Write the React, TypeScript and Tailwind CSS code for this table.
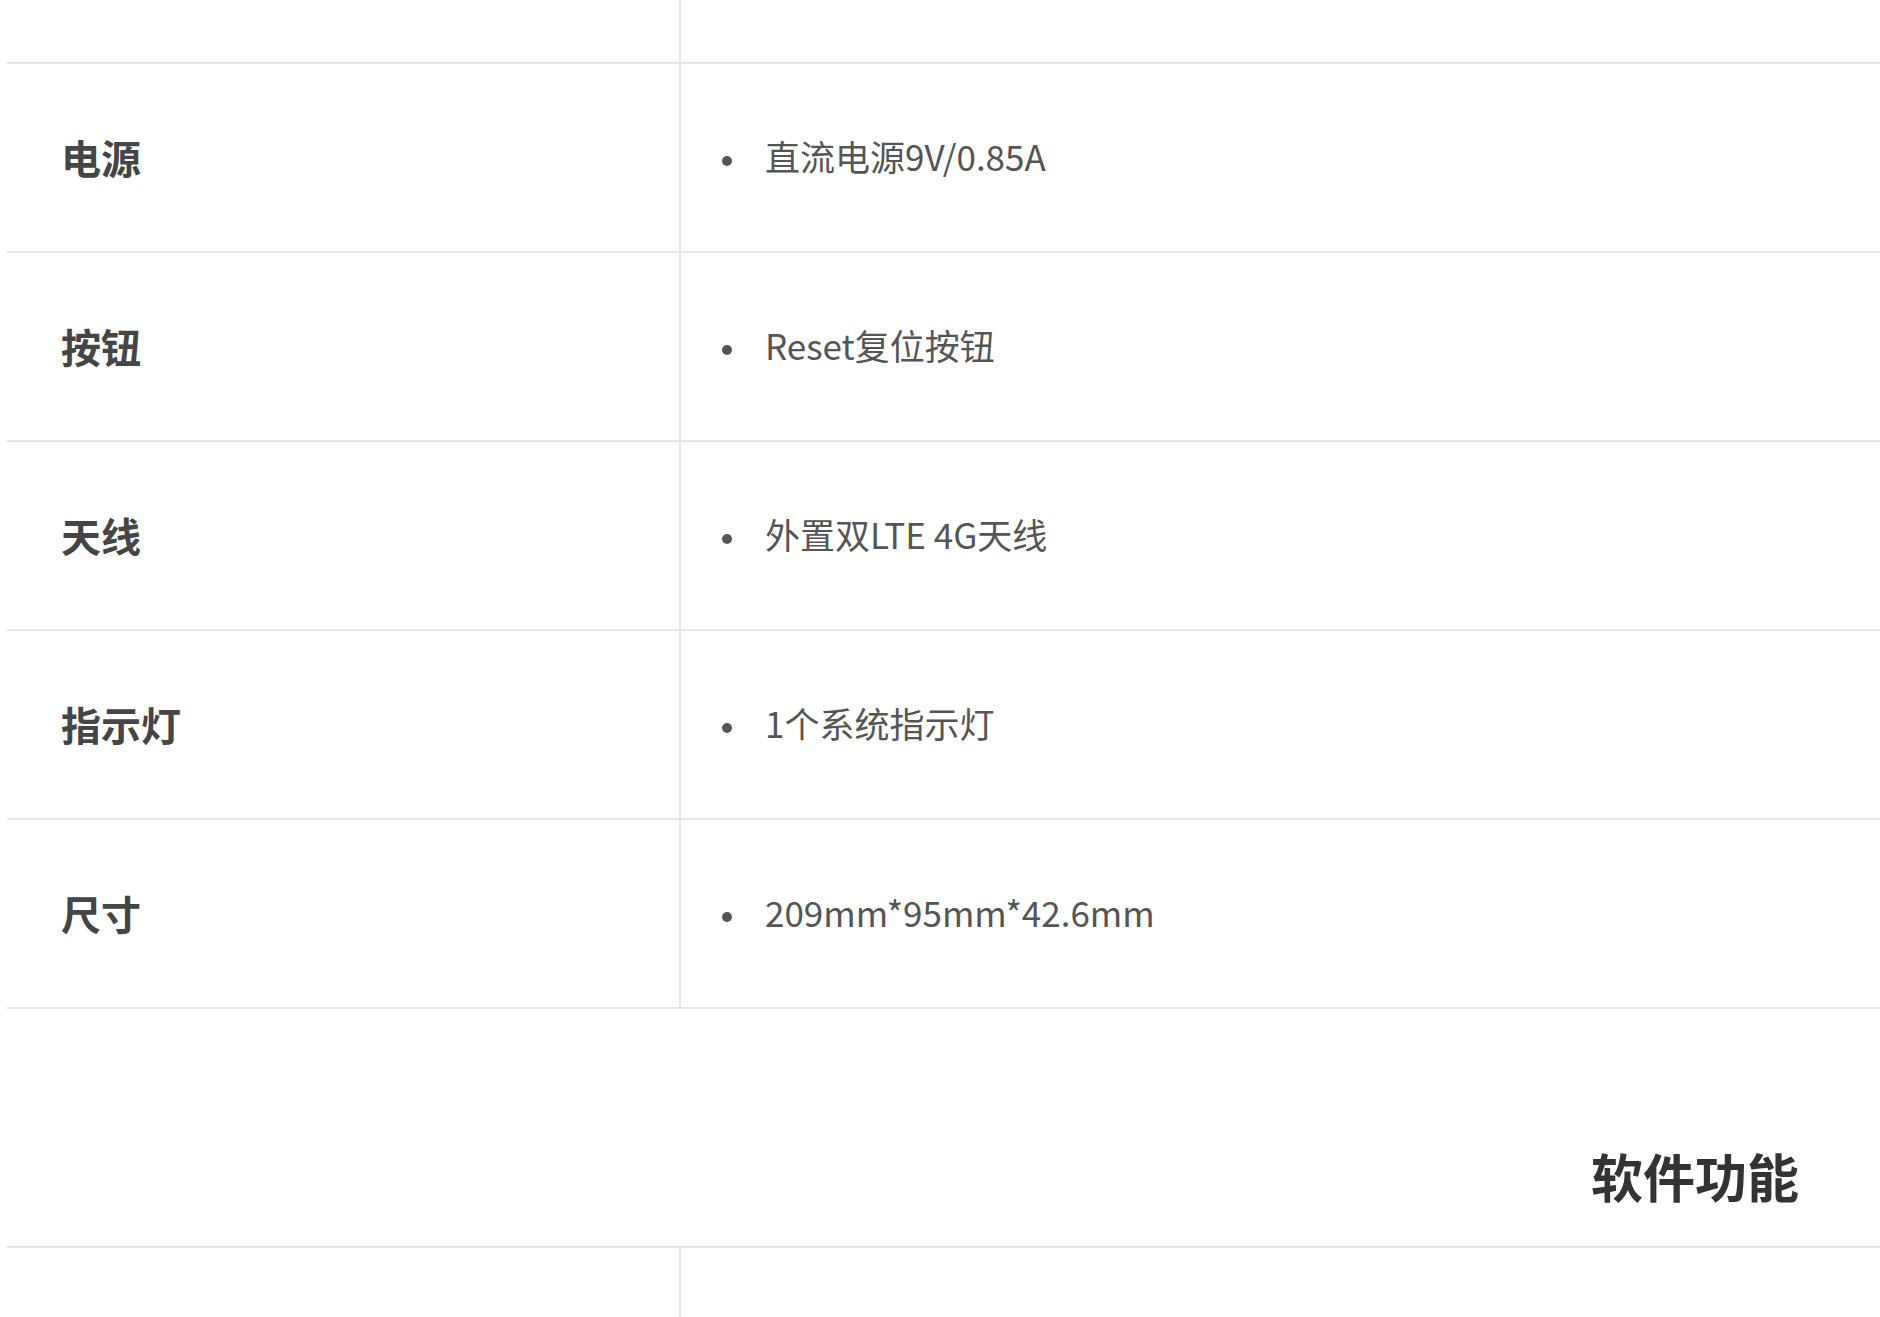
const specs = [
  { label: "电源", value: "直流电源9V/0.85A" },
  { label: "按钮", value: "Reset复位按钮" },
  { label: "天线", value: "外置双LTE 4G天线" },
  { label: "指示灯", value: "1个系统指示灯" },
  { label: "尺寸", value: "209mm*95mm*42.6mm" },
];

function SpecRow({ label, value }: { label: string; value: string }) {
  return (
    <div className="grid h-[189px] grid-cols-[672px_1fr] border-b-2 border-[#e6e6e6]">
      <div className="flex items-center pb-[2px] pl-[54px] text-[40px] font-bold text-[#454545]">{label}</div>
      <div className="flex items-center gap-[33px] border-l-2 border-[#e6e6e6] pb-[2px] pl-[41px]">
        <span className="h-[10px] w-[10px] shrink-0 translate-y-[4px] rounded-full bg-[#555]" />
        <span className="text-[35px] text-[#555]">{value}</span>
      </div>
    </div>
  );
}

export default function App() {
  return (
    <div className="h-[1317px] w-full overflow-hidden bg-white font-['Noto_Sans_CJK_SC',sans-serif]">
      <div className="ml-[7px] w-[3376px]">
        {/* top of the previous row, cut off */}
        <div className="grid h-[64px] grid-cols-[672px_1fr] border-b-2 border-[#e6e6e6]">
          <div />
          <div className="border-l-2 border-[#e6e6e6]" />
        </div>

        {specs.map((s) => (
          <SpecRow key={s.label} label={s.label} value={s.value} />
        ))}

        <div className="h-[237px] pt-[136px] text-center">
          <h2 className="text-[52px] font-bold leading-[62px] text-[#333]">软件功能</h2>
        </div>

        <div className="grid h-[71px] grid-cols-[672px_1fr] border-t-2 border-[#e6e6e6]">
          <div />
          <div className="border-l-2 border-[#e6e6e6]" />
        </div>
      </div>
    </div>
  );
}
